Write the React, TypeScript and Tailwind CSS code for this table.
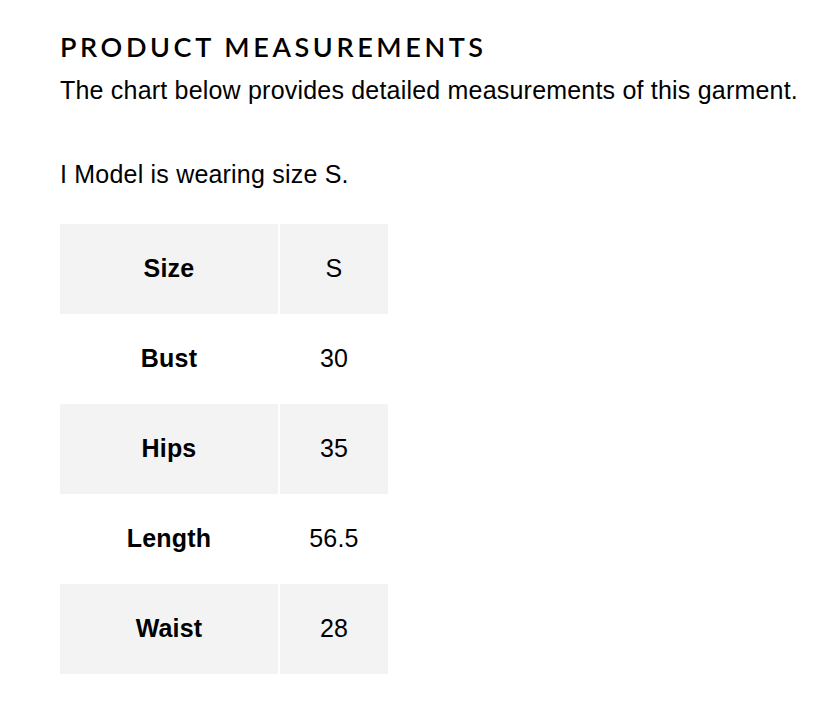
const rows: [string, string][] = [
  ["Size", "S"],
  ["Bust", "30"],
  ["Hips", "35"],
  ["Length", "56.5"],
  ["Waist", "28"],
];

export default function App() {
  return (
    <div className="min-h-[702px] w-[838px] bg-white pl-[60px] pt-[30px] text-black font-['Liberation_Sans',Arial,sans-serif]">
      <h2 className="font-['Lato',sans-serif] text-[27px] font-semibold leading-[34px] tracking-[3.6px]">
        PRODUCT MEASUREMENTS
      </h2>
      <p className="mt-[11px] text-[25px] leading-[30px] tracking-[0.2px]">
        The chart below provides detailed measurements of this garment.
      </p>
      <p className="mt-[54px] text-[25px] leading-[30px] tracking-[0.2px]">I Model is wearing size S.</p>
      <table className="mt-[35px] -ml-[2px] border-separate border-spacing-x-[2px] border-spacing-y-0 text-[25px] tracking-[0.2px]">
        <tbody>
          {rows.map(([label, value], i) => (
            <tr key={label} className={i % 2 === 0 ? "bg-[#f3f3f3]" : "bg-white"}>
              <td className="h-[90px] w-[218px] p-0 text-center font-bold">{label}</td>
              <td className="h-[90px] w-[108px] p-0 text-center">{value}</td>
            </tr>
          ))}
        </tbody>
      </table>
    </div>
  );
}
